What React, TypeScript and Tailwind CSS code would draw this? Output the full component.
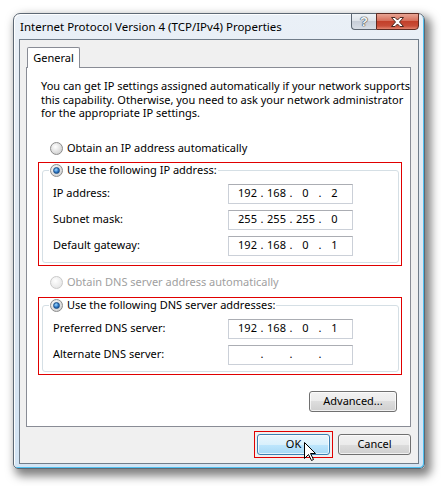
import React from "react";

function Radio({ checked = false, disabled = false }: { checked?: boolean; disabled?: boolean }) {
  return (
    <span
      className={`w-[13px] h-[13px] shrink-0 rounded-full border flex items-center justify-center ${
        disabled
          ? "border-[#c9c9c9] bg-[radial-gradient(circle_at_40%_35%,#ffffff,#e8e8e8_70%,#dcdcdc)]"
          : "border-[#8c8c8c] bg-[radial-gradient(circle_at_40%_35%,#ffffff,#d6d6d6_70%,#c4c4c4)]"
      }`}
    >
      {checked && (
        <span className="w-[7px] h-[7px] rounded-full border border-[#1c4f86] bg-[radial-gradient(circle_at_40%_35%,#9fdcff,#2a73c4_55%,#0d3f7c)]" />
      )}
    </span>
  );
}

function IpField({ parts }: { parts: string[] }) {
  return (
    <div className="w-[125px] h-[20px] border border-[#cbd0d8] border-t-[#abadb3] bg-white flex items-center pl-[7px]">
      {parts.map((p, i) => (
        <React.Fragment key={i}>
          <span className="w-[23px] text-center">{p}</span>
          {i < 3 && <span className="w-[6px] text-center">.</span>}
        </React.Fragment>
      ))}
    </div>
  );
}

function Row({ label, parts }: { label: string; parts: string[] }) {
  return (
    <div className="h-[20px] flex items-center">
      <span className="w-[175px]">{label}</span>
      <IpField parts={parts} />
    </div>
  );
}

function Button({ label, hot = false, width, children }: { label: string; hot?: boolean; width: string; children?: React.ReactNode }) {
  return (
    <div
      className={`relative h-[21px] rounded-[3px] border flex items-center justify-center shadow-[inset_0_0_0_1px_rgba(255,255,255,0.7)] ${width} ${
        hot
          ? "border-[#3c7fb1] bg-[linear-gradient(to_bottom,#eaf6fd_0%,#d9f0fc_50%,#bee6fd_50%,#a7d9f5_100%)]"
          : "border-[#707070] bg-[linear-gradient(to_bottom,#f2f2f2_0%,#ebebeb_50%,#dddddd_50%,#cfcfcf_100%)]"
      }`}
    >
      {label}
      {children}
    </div>
  );
}

export default function App() {
  return (
    <div className="w-[441px] h-[486px] bg-white pl-[13px] pt-[13px] font-['Noto_Sans',sans-serif] text-[11px] text-black whitespace-nowrap">
      {/* window frame */}
      <div className="relative w-[412px] h-[456px] rounded-t-[7px] rounded-b-[5px] border border-[#5d6874] bg-[linear-gradient(to_bottom,#eaf0f7,#dde6f0_60%,#d3e4f4)] shadow-[inset_1px_1px_0_rgba(255,255,255,0.9),inset_-1px_-1px_0_#4fc0f0,4px_5px_10px_2px_rgba(0,0,0,0.5)] flex flex-col">
        {/* title bar */}
        <div className="h-[25px] flex justify-between">
          <div className="pl-[6px] flex items-center text-[11.5px]">Internet Protocol Version 4 (TCP/IPv4) Properties</div>
          <div className="flex -mt-[1px] mr-[5px] h-[17px]">
            <div className="w-[25px] h-[17px] rounded-bl-[4px] border border-r-0 border-[#5b6570] bg-[linear-gradient(to_bottom,#eef2f6_0%,#dfe4ea_45%,#c7ced8_50%,#d8dee6_100%)] flex items-center justify-center text-[13px] font-bold font-['Liberation_Sans',sans-serif] text-[#f4f6f8] [text-shadow:0_0_1px_#36404a,0_0_1px_#36404a,0_0_1px_#36404a]">
              ?
            </div>
            <div className="w-[43px] h-[17px] rounded-br-[4px] border border-[#5e2b22] bg-[linear-gradient(to_bottom,#e8a493_0%,#d66f5b_45%,#c3402a_50%,#c84d38_80%,#e48670_100%)] flex items-center justify-center">
              <svg width="13" height="10" viewBox="0 0 13 10">
                <polygon points="0.5,0.5 4,0.5 6.5,3 9,0.5 12.5,0.5 8.5,5 12.5,9.5 9,9.5 6.5,7 4,9.5 0.5,9.5 4.5,5" fill="#ffffff" stroke="#4a2a22" strokeWidth="1" />
              </svg>
            </div>
          </div>
        </div>

        {/* client area */}
        <div className="mx-[5px] h-[425px] border border-[#707c89] bg-[#f0f0f0] flex flex-col">
          {/* tab strip */}
          <div className="mt-[7px] ml-[7px] h-[20px] flex">
            <div className="relative z-10 w-[53px] h-[21px] border border-b-0 border-[#898c95] rounded-t-[2px] bg-white flex items-center justify-center">
              General
            </div>
          </div>

          {/* tab panel */}
          <div className="relative ml-[6px] w-[385px] h-[360px] border border-[#898c95] bg-white flex flex-col">
            <p className="mt-[11px] ml-[14px] leading-[13.5px]">
              You can get IP settings assigned automatically if your network supports
              <br />
              this capability. Otherwise, you need to ask your network administrator
              <br />
              for the appropriate IP settings.
            </p>

            <div className="mt-[21px] ml-[23px] h-[15px] flex items-center gap-[4px]">
              <Radio />
              <span>Obtain an IP address automatically</span>
            </div>

            <div className="relative mt-[6px] ml-[11px] w-[364px] border border-[#e00000] pl-[3px] pr-[2px] pb-[2px]">
              <fieldset className="border border-[#d5dfe5] rounded-[3px]">
                <legend className="ml-[6px] px-[1px]">
                  <span className="h-[15px] flex items-center gap-[4px]">
                    <Radio checked />
                    <span>Use the following IP address:</span>
                  </span>
                </legend>
                <div className="pl-[10px] pt-[6px] pb-[6px] flex flex-col gap-[6px]">
                  <Row label="IP address:" parts={["192", "168", "0", "2"]} />
                  <Row label="Subnet mask:" parts={["255", "255", "255", "0"]} />
                  <Row label="Default gateway:" parts={["192", "168", "0", "1"]} />
                </div>
              </fieldset>
            </div>

            <div className="mt-[9px] ml-[23px] h-[15px] flex items-center gap-[4px] text-[#a0a0a0]">
              <Radio disabled />
              <span>Obtain DNS server address automatically</span>
            </div>

            <div className="mt-[7px] ml-[11px] w-[364px] border border-[#e00000] pl-[3px] pr-[2px] pb-[2px]">
              <fieldset className="border border-[#d5dfe5] rounded-[3px]">
                <legend className="ml-[6px] px-[1px]">
                  <span className="h-[15px] flex items-center gap-[4px]">
                    <Radio checked />
                    <span>Use the following DNS server addresses:</span>
                  </span>
                </legend>
                <div className="pl-[10px] pt-[6px] pb-[6px] flex flex-col gap-[6px]">
                  <Row label="Preferred DNS server:" parts={["192", "168", "0", "1"]} />
                  <Row label="Alternate DNS server:" parts={["", "", "", ""]} />
                </div>
              </fieldset>
            </div>

            <div className="mt-[16px] mr-[13px] self-end">
              <Button label="Advanced..." width="w-[88px]" />
            </div>
          </div>

          {/* dialog buttons */}
          <div className="mt-[4px] mr-[7px] flex items-center justify-end gap-[5px]">
            <div className="border border-[#e00000] p-[2px]">
              <Button label="OK" hot width="w-[73px]">
                <svg className="absolute left-[46px] top-[7px]" width="13" height="20" viewBox="0 0 13 20">
                  <path d="M0.5 0.5 L0.5 16.5 L4.5 12.5 L7.5 18.5 L9.5 17.5 L6.5 11.5 L11.5 11.5 Z" fill="#ffffff" stroke="#000000" strokeWidth="1" strokeLinejoin="miter" />
                </svg>
              </Button>
            </div>
            <Button label="Cancel" width="w-[73px]" />
          </div>
        </div>
      </div>
    </div>
  );
}
